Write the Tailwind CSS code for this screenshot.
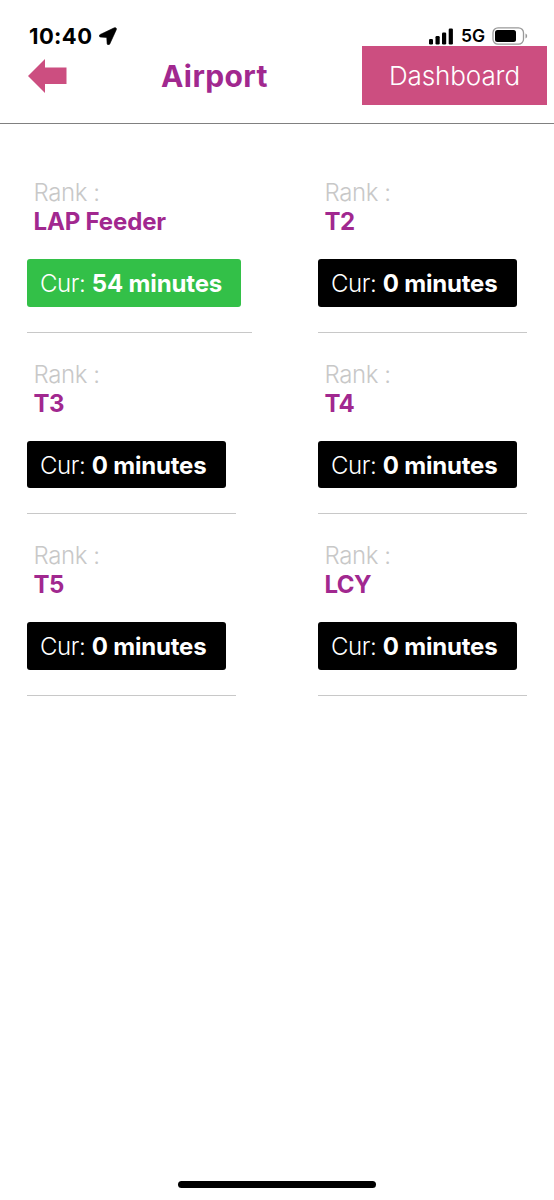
<!DOCTYPE html>
<html lang="en">
<head>
<meta charset="utf-8">
<title>Airport</title>
<script src="https://cdn.jsdelivr.net/npm/@tailwindcss/browser@4"></script>
</head>
<body class="bg-white">
<div class="flex h-[1200px] w-[554px] flex-col overflow-hidden bg-white font-['Inter',sans-serif]">
  <div class="flex h-[46px] shrink-0 items-start justify-between pt-[25.500px] pr-[26px] pl-[29px]">
    <div class="flex items-center gap-[7px]">
      <span class="text-[22px] leading-[20px] font-bold tracking-[0.400px]">10:40</span>
      <svg class="h-[18px] w-[18px]" viewBox="0 0 18 18"><path d="M15.300.8 1.200 7.500C-.2 8.200.1 10 1.600 10.100l5.600.3c.4 0 .6.200.6.600l.3 5.500c.1 1.500 2 1.800 2.700.4L17.300 2.700C17.900 1.300 16.700.2 15.300.8Z" stroke="#000" stroke-width=".6"/></svg>
    </div>
    <div class="flex h-5 items-center">
      <svg class="h-[18px] w-[26px]" viewBox="0 0 26 18"><rect x="1" y="12" width="4" height="5.500" rx="1.200"/><rect x="7.500" y="9" width="4.200" height="8.500" rx="1.200"/><rect x="14" y="5.500" width="4.200" height="12" rx="1.200"/><rect x="20.700" y="1.500" width="4.200" height="16" rx="1.200"/></svg>
      <span class="ml-[7px] w-[24px] text-[17.500px] leading-5 font-semibold whitespace-nowrap">5G</span>
      <svg class="ml-[7px] h-[18px] w-[36px]" viewBox="0 0 36 18"><rect x="1" y=".8" width="30.500" height="16.400" rx="5" fill="none" stroke="#999" stroke-width="1.300"/><rect x="3" y="3" width="21" height="12" rx="2.500"/><path d="M33.500 6.500c2.200.8 2.200 4.200 0 5Z" fill="#999"/></svg>
    </div>
  </div>
  <header class="flex h-[78px] shrink-0 items-start border-b-[1.500px] border-[#808080] pr-[7px] pl-[28px]">
    <svg class="mt-[13px] h-[34px] w-[38.500px]" viewBox="0 0 38.5 34"><path d="M0 17 17 0V8.500H38.500V25H17V34Z" fill="#cc4e80"/></svg>
    <h1 class="ml-[94.500px] h-[60px] text-[30px] leading-[60px] font-bold tracking-[0.400px] text-[#a1288f]">Airport</h1>
    <button class="ml-auto h-[59px] w-[185px] bg-[#cc4e80] text-[26px] leading-[59px] font-light tracking-[-0.100px] text-white">Dashboard</button>
  </header>
  <main class="grid grid-cols-[291px_1fr] gap-y-[27px] pt-[54px] pl-[26.500px]">
    <section class="flex h-[154.500px] w-[225.500px] flex-col items-start border-b-[1.500px] border-[#c8c8c8]">
      <p class="pl-[7px] text-[24px] leading-[29px] font-light tracking-[-0.400px] text-[#c8c8c8]">Rank :</p>
      <p class="pl-[7px] text-[24px] leading-[29px] font-bold tracking-[-0.150px] text-[#a1288f]">LAP Feeder</p>
      <div class="mt-[23px] h-[47.500px] w-[214.500px] rounded-[3px] bg-[#33c048] pl-[13.500px] text-[24px] leading-[49px] font-light tracking-[-0.400px] whitespace-nowrap text-white">Cur: <b class="font-bold tracking-[-0.150px]">54 minutes</b></div>
    </section>
    <section class="flex h-[154.500px] w-[209.500px] flex-col items-start border-b-[1.500px] border-[#c8c8c8]">
      <p class="pl-[7px] text-[24px] leading-[29px] font-light tracking-[-0.400px] text-[#c8c8c8]">Rank :</p>
      <p class="pl-[7px] text-[24px] leading-[29px] font-bold tracking-[-0.450px] text-[#a1288f]">T2</p>
      <div class="mt-[23px] h-[47.500px] w-[199px] rounded-[3px] bg-black pl-[13.500px] text-[24px] leading-[49px] font-light tracking-[-0.400px] whitespace-nowrap text-white">Cur: <b class="font-bold tracking-[-0.200px]">0 minutes</b></div>
    </section>
    <section class="flex h-[154.500px] w-[209.500px] flex-col items-start border-b-[1.500px] border-[#c8c8c8]">
      <p class="pl-[7px] text-[24px] leading-[29px] font-light tracking-[-0.400px] text-[#c8c8c8]">Rank :</p>
      <p class="pl-[7px] text-[24px] leading-[29px] font-bold tracking-[-0.450px] text-[#a1288f]">T3</p>
      <div class="mt-[23px] h-[47.500px] w-[199px] rounded-[3px] bg-black pl-[13.500px] text-[24px] leading-[49px] font-light tracking-[-0.400px] whitespace-nowrap text-white">Cur: <b class="font-bold tracking-[-0.200px]">0 minutes</b></div>
    </section>
    <section class="flex h-[154.500px] w-[209.500px] flex-col items-start border-b-[1.500px] border-[#c8c8c8]">
      <p class="pl-[7px] text-[24px] leading-[29px] font-light tracking-[-0.400px] text-[#c8c8c8]">Rank :</p>
      <p class="pl-[7px] text-[24px] leading-[29px] font-bold tracking-[-0.450px] text-[#a1288f]">T4</p>
      <div class="mt-[23px] h-[47.500px] w-[199px] rounded-[3px] bg-black pl-[13.500px] text-[24px] leading-[49px] font-light tracking-[-0.400px] whitespace-nowrap text-white">Cur: <b class="font-bold tracking-[-0.200px]">0 minutes</b></div>
    </section>
    <section class="flex h-[154.500px] w-[209.500px] flex-col items-start border-b-[1.500px] border-[#c8c8c8]">
      <p class="pl-[7px] text-[24px] leading-[29px] font-light tracking-[-0.400px] text-[#c8c8c8]">Rank :</p>
      <p class="pl-[7px] text-[24px] leading-[29px] font-bold tracking-[-0.450px] text-[#a1288f]">T5</p>
      <div class="mt-[23px] h-[47.500px] w-[199px] rounded-[3px] bg-black pl-[13.500px] text-[24px] leading-[49px] font-light tracking-[-0.400px] whitespace-nowrap text-white">Cur: <b class="font-bold tracking-[-0.200px]">0 minutes</b></div>
    </section>
    <section class="flex h-[154.500px] w-[209.500px] flex-col items-start border-b-[1.500px] border-[#c8c8c8]">
      <p class="pl-[7px] text-[24px] leading-[29px] font-light tracking-[-0.400px] text-[#c8c8c8]">Rank :</p>
      <p class="pl-[7px] text-[24px] leading-[29px] font-bold tracking-[-0.600px] text-[#a1288f]">LCY</p>
      <div class="mt-[23px] h-[47.500px] w-[199px] rounded-[3px] bg-black pl-[13.500px] text-[24px] leading-[49px] font-light tracking-[-0.400px] whitespace-nowrap text-white">Cur: <b class="font-bold tracking-[-0.200px]">0 minutes</b></div>
    </section>
  </main>
  <div class="mx-auto mt-auto mb-[12px] h-[7px] w-[198px] shrink-0 rounded-full bg-black"></div>
</div>
</body>
</html>
